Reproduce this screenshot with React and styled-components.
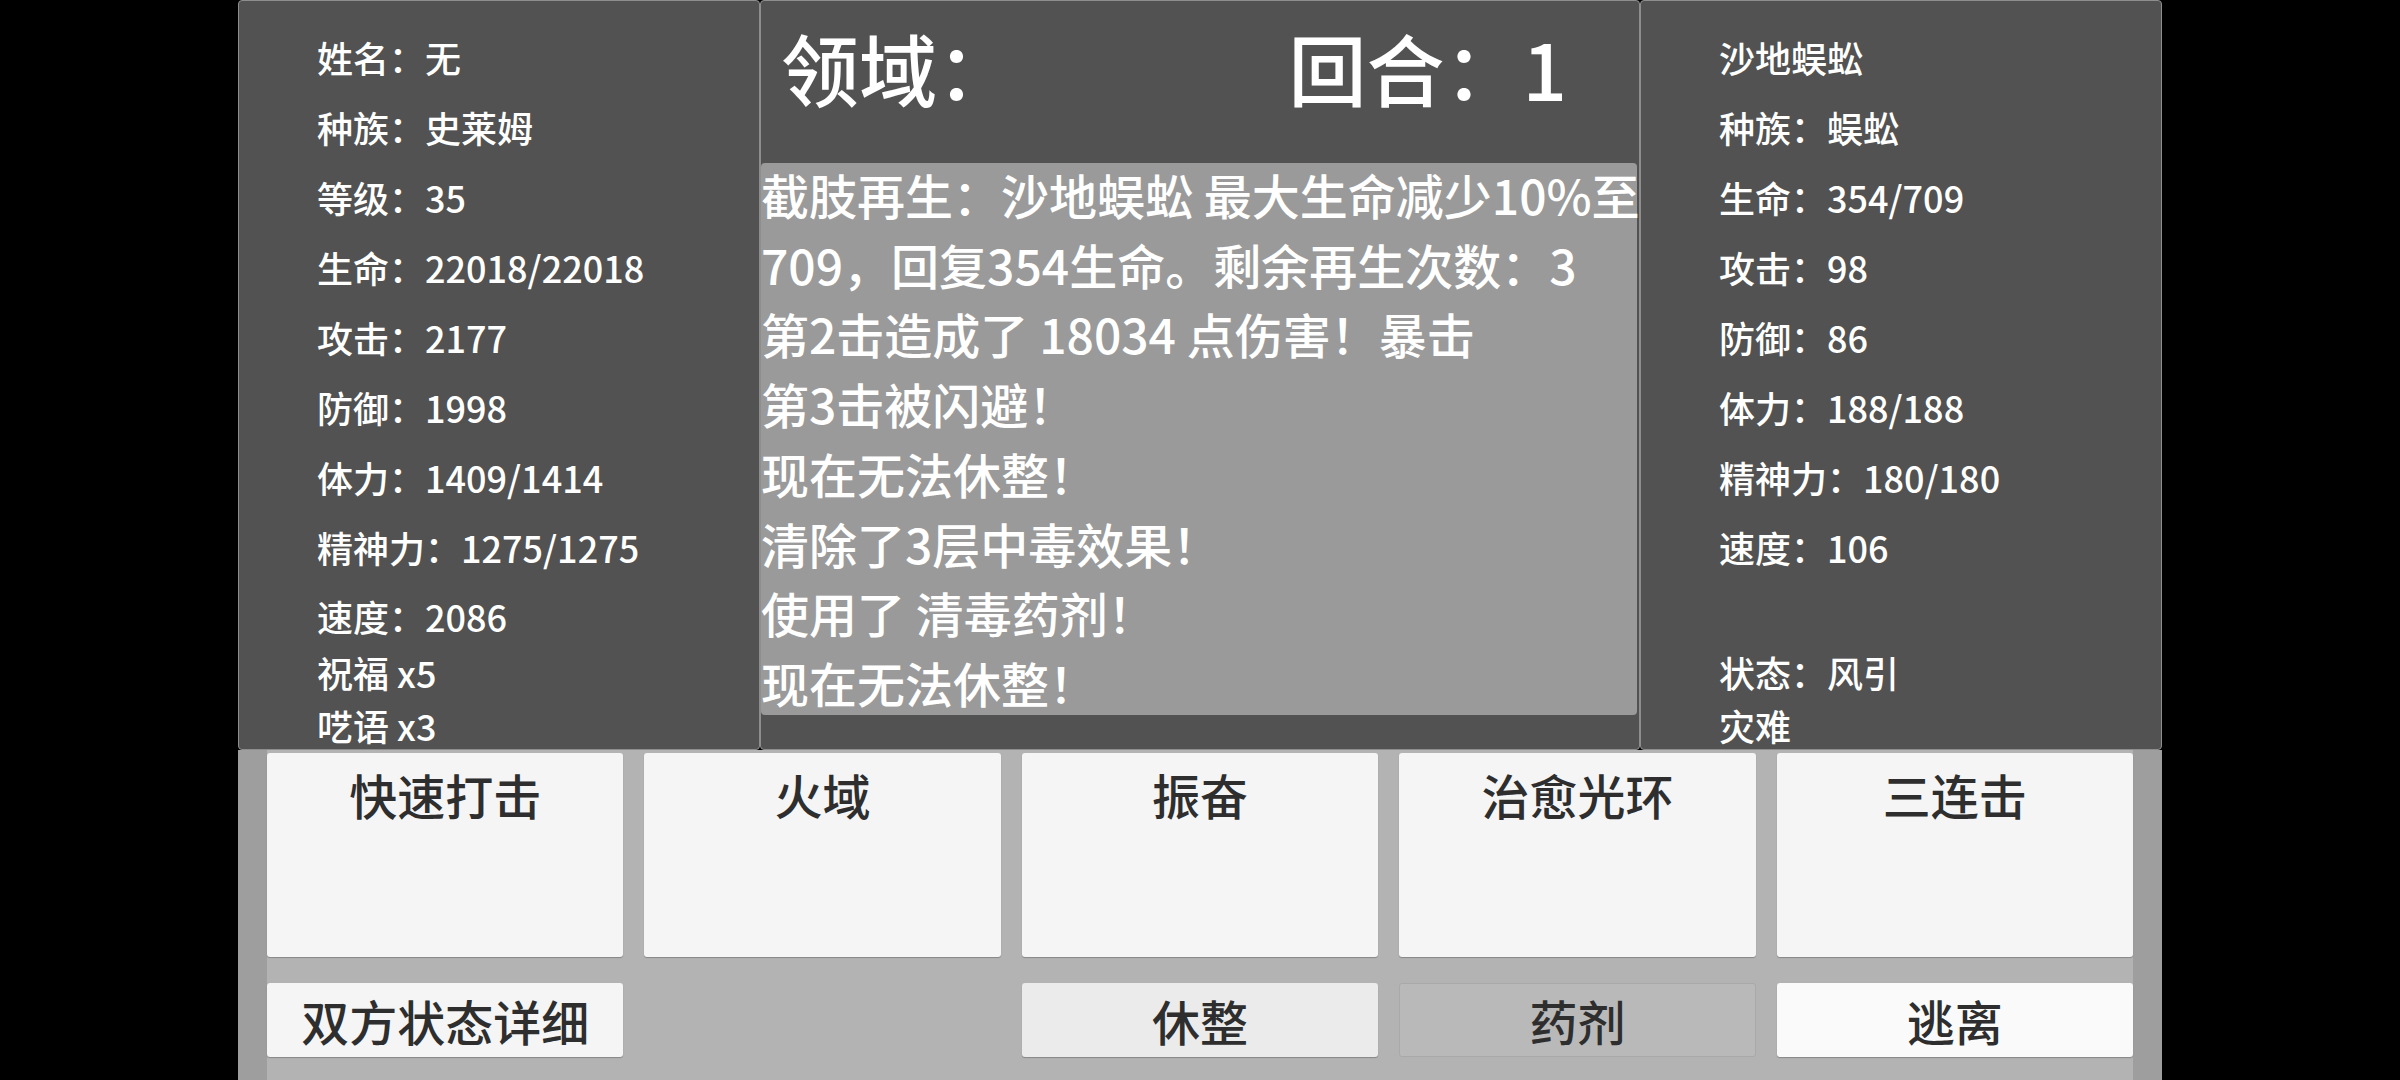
import React from "react";
import styled, { createGlobalStyle } from "styled-components";

const Global = createGlobalStyle`
  html, body { margin: 0; padding: 0; background: #000; }
  body { font-family: "Noto Sans CJK SC", "Noto Sans", sans-serif; }
  * { box-sizing: border-box; }
`;

const Frame = styled.div`
  width: 1924px;
  height: 1080px;
  margin-left: 238px;
  display: grid;
  grid-template-rows: 750px 330px;
  overflow: hidden;
`;

const TopRow = styled.div`
  display: grid;
  grid-template-columns: 522px 880px 522px;
`;

const Panel = styled.section`
  background: #525252;
  border: 1px solid #8e8e8e;
  border-radius: 4px;
  overflow: hidden;
  display: flex;
  flex-direction: column;
`;

const StatGrid = styled.div`
  display: grid;
  grid-template-rows: repeat(8, 70px) 63px 53px 53px;
  padding: 21px 0 0 78px;
  color: #ffffff;
  font-size: 36px;
  font-weight: 500;
`;

const StatRow = styled.div`
  display: flex;
  align-items: center;
  white-space: nowrap;
  &:nth-child(9) {
    padding-top: 5px;
  }
`;

const Header = styled.header`
  height: 162px;
  flex: none;
  display: flex;
  justify-content: space-between;
  align-items: flex-start;
  padding: 20px 72px 0 20px;
  color: #ffffff;
  font-size: 78px;
  font-weight: 500;
  line-height: 1.2;
`;

const Log = styled.div`
  height: 552px;
  flex: none;
  margin-right: 2px;
  background: #9a9a9a;
  border-radius: 4px;
  color: #ffffff;
  font-size: 48px;
  font-weight: 500;
  line-height: 69.7px;
`;

const LogLine = styled.div`
  white-space: nowrap;
  &:first-child {
    margin-top: -3px;
  }
`;

const Bottom = styled.div`
  background: #9e9e9e;
  padding: 0 29px;
`;

const ButtonGrid = styled.div`
  height: 100%;
  background: #b3b3b3;
  display: grid;
  grid-template-columns: repeat(5, 1fr);
  grid-template-rows: 204px 74px;
  column-gap: 21px;
  row-gap: 26px;
  padding-top: 3px;
`;

const SkillButton = styled.div`
  background: #f5f5f5;
  border-radius: 3px;
  box-shadow: 0 1px 1px rgba(0, 0, 0, 0.25);
  color: #2e2e2e;
  font-size: 48px;
  font-weight: 500;
  line-height: 72px;
  padding-top: 5px;
  text-align: center;
`;

const tones = {
  normal: "#f5f5f5",
  rest: "#ebebeb",
  disabled: "#b9b9b9",
  flee: "#fafafa",
};

const ActionButton = styled.div`
  grid-column: ${(p) => p.$col};
  background: ${(p) => tones[p.$tone || "normal"]};
  border-radius: 3px;
  box-shadow: ${(p) =>
    p.$tone === "disabled"
      ? "inset 0 0 0 1px #a9a9a9"
      : "0 1px 1px rgba(0, 0, 0, 0.25)"};
  color: #2e2e2e;
  font-size: 48px;
  font-weight: 500;
  display: flex;
  align-items: center;
  justify-content: center;
`;

const playerStats = [
  "姓名：无",
  "种族：史莱姆",
  "等级：35",
  "生命：22018/22018",
  "攻击：2177",
  "防御：1998",
  "体力：1409/1414",
  "精神力：1275/1275",
  "速度：2086",
  "祝福 x5",
  "呓语 x3",
];

const enemyStats = [
  "沙地蜈蚣",
  "种族：蜈蚣",
  "生命：354/709",
  "攻击：98",
  "防御：86",
  "体力：188/188",
  "精神力：180/180",
  "速度：106",
  "",
  "状态：风引",
  "灾难",
];

const logLines = [
  "截肢再生：沙地蜈蚣 最大生命减少10%至",
  "709，回复354生命。剩余再生次数：3",
  "第2击造成了 18034 点伤害！暴击",
  "第3击被闪避！",
  "现在无法休整！",
  "清除了3层中毒效果！",
  "使用了 清毒药剂！",
  "现在无法休整！",
];

const skills = ["快速打击", "火域", "振奋", "治愈光环", "三连击"];

function StatPanel({ rows }) {
  return (
    <Panel>
      <StatGrid>
        {rows.map((r, i) => (
          <StatRow key={i}>{r}</StatRow>
        ))}
      </StatGrid>
    </Panel>
  );
}

export default function App() {
  return (
    <>
      <Global />
      <Frame>
        <TopRow>
          <StatPanel rows={playerStats} />
          <Panel>
            <Header>
              <span>领域：</span>
              <span>回合：1</span>
            </Header>
            <Log>
              {logLines.map((l, i) => (
                <LogLine key={i}>{l}</LogLine>
              ))}
            </Log>
          </Panel>
          <StatPanel rows={enemyStats} />
        </TopRow>
        <Bottom>
          <ButtonGrid>
            {skills.map((s) => (
              <SkillButton key={s}>{s}</SkillButton>
            ))}
            <ActionButton $col={1}>双方状态详细</ActionButton>
            <ActionButton $col={3} $tone="rest">休整</ActionButton>
            <ActionButton $col={4} $tone="disabled">药剂</ActionButton>
            <ActionButton $col={5} $tone="flee">逃离</ActionButton>
          </ButtonGrid>
        </Bottom>
      </Frame>
    </>
  );
}
